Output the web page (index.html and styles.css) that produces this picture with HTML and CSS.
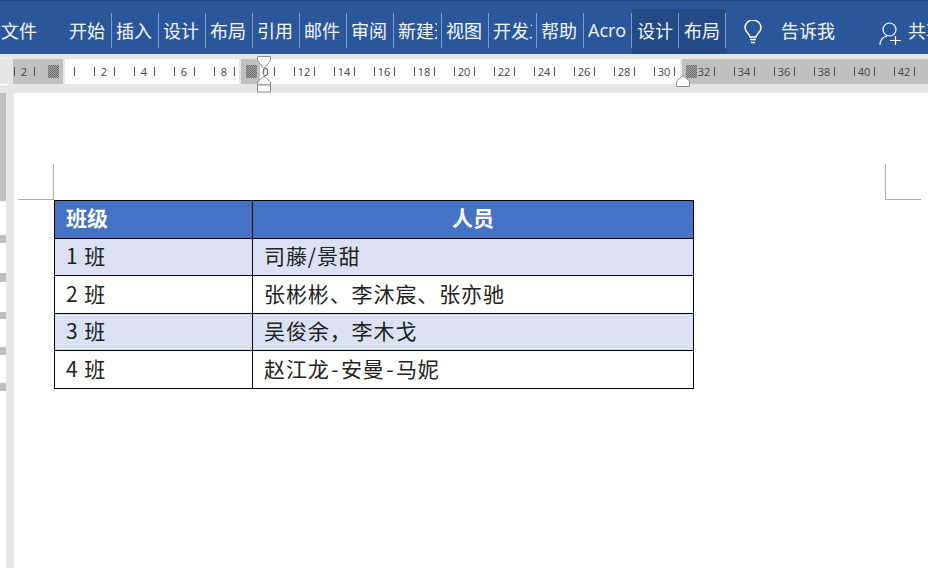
FILE: index.html
```html
<!DOCTYPE html>
<html lang="zh-CN">
<head>
<meta charset="utf-8">
<title>Word</title>
<link rel="stylesheet" href="styles.css">
</head>
<body>
<header class="ribbon">
  <div class="file-tab">文件</div>
  <nav class="tabs">
    <div class="tab">开始</div>
    <div class="tab">插入</div>
    <div class="tab">设计</div>
    <div class="tab">布局</div>
    <div class="tab">引用</div>
    <div class="tab">邮件</div>
    <div class="tab">审阅</div>
    <div class="tab tab-wide"><span class="clip">新建选</span></div>
    <div class="tab">视图</div>
    <div class="tab tab-wide"><span class="clip">开发工</span></div>
    <div class="tab">帮助</div>
    <div class="tab tab-wide tab-latin">Acro</div>
    <div class="context-tabs">
      <div class="tab">设计</div>
      <div class="tab">布局</div>
    </div>
  </nav>
  <svg class="bulb" width="18" height="25" viewBox="0 0 18 25" fill="none" stroke="#fff" stroke-width="1.4">
    <path d="M6 17c0-3-5-5-5-9a8 8 0 0 1 16 0c0 4-5 6-5 9z"/>
    <path d="M6 19.500h6M7 22.500h4"/>
  </svg>
  <div class="tell-me">告诉我</div>
  <svg class="person" width="24" height="25" viewBox="0 0 24 25" fill="none" stroke="#fff" stroke-width="1.2">
    <circle cx="10.500" cy="7.500" r="6.500"/>
    <path d="M1 23c0-5 3-8 7-9"/>
    <path d="M11 18.500h11M16.500 14v9"/>
  </svg>
  <div class="share">共享</div>
</header>

<section class="ruler-band">
  <div class="ruler-corner"></div>
  <div class="ruler">
    <div class="cell"><i></i><span>2</span><i></i></div>
    <div class="cell"><i></i><span></span><i></i></div>
    <div class="cell"><i></i><span>2</span><i></i></div>
    <div class="cell"><i></i><span>4</span><i></i></div>
    <div class="cell"><i></i><span>6</span><i></i></div>
    <div class="cell"><i></i><span>8</span><i></i></div>
    <div class="cell cell-zero"><i></i><span>0</span><i></i></div>
    <div class="cell"><i></i><span>12</span><i></i></div>
    <div class="cell"><i></i><span>14</span><i></i></div>
    <div class="cell"><i></i><span>16</span><i></i></div>
    <div class="cell"><i></i><span>18</span><i></i></div>
    <div class="cell"><i></i><span>20</span><i></i></div>
    <div class="cell"><i></i><span>22</span><i></i></div>
    <div class="cell"><i></i><span>24</span><i></i></div>
    <div class="cell"><i></i><span>26</span><i></i></div>
    <div class="cell"><i></i><span>28</span><i></i></div>
    <div class="cell"><i></i><span>30</span><i></i></div>
    <div class="cell"><i></i><span>32</span><i></i></div>
    <div class="cell"><i></i><span>34</span><i></i></div>
    <div class="cell"><i></i><span>36</span><i></i></div>
    <div class="cell"><i></i><span>38</span><i></i></div>
    <div class="cell"><i></i><span>40</span><i></i></div>
    <div class="cell"><i></i><span>42</span><i></i></div>
    <div class="hatch hatch-a"></div>
    <div class="hatch hatch-b"></div>
    <div class="hatch hatch-c"></div>
  </div>
  <svg class="marker marker-left" width="14" height="37" viewBox="0 0 14 37" fill="#fff" stroke="#8c8c8c" stroke-width="1">
    <path d="M.5.500h13v4L7 12.500.5 4.500z"/>
    <path d="M7 20l6.500 6v3H.5v-3z"/>
    <path d="M.5 29h13v7H.5z"/>
  </svg>
  <svg class="marker marker-right" width="14" height="12" viewBox="0 0 14 12" fill="#fff" stroke="#8c8c8c" stroke-width="1">
    <path d="M7 .5l6.500 5.500v5.500H.5V6z"/>
  </svg>
</section>

<main class="workspace">
  <aside class="vruler"></aside>
  <div class="page">
    <div class="crops">
      <div class="crop crop-left"></div>
      <div class="crop crop-right"></div>
    </div>
    <table class="sheet">
      <colgroup><col class="col-a"><col class="col-b"></colgroup>
      <thead>
        <tr class="row-tall"><th class="head-left">班级</th><th>人员</th></tr>
      </thead>
      <tbody>
        <tr class="row-short band"><td>1 班</td><td>司藤/景甜</td></tr>
        <tr class="row-tall"><td>2 班</td><td>张彬彬、李沐宸、张亦驰</td></tr>
        <tr class="row-short band"><td>3 班</td><td>吴俊余，李木戈</td></tr>
        <tr class="row-tall"><td>4 班</td><td>赵江龙<span class="dash">-</span>安曼<span class="dash">-</span>马妮</td></tr>
      </tbody>
    </table>
  </div>
</main>
</body>
</html>
```
FILE: styles.css
```css
* { box-sizing: border-box; }
html, body { margin: 0; padding: 0; }
body {
  width: 928px;
  height: 568px;
  overflow: hidden;
  background: #fff;
  font-family: "Noto Sans CJK SC", "Noto Sans", sans-serif;
}

/* ribbon */
.ribbon {
  height: 54px;
  display: flex;
  align-items: flex-start;
  background: #2b579a;
  border-top: 1px solid #1f4579;
  color: #f4f7fb;
  font-size: 18px;
  line-height: 26px;
  white-space: nowrap;
  overflow: hidden;
}
.ribbon > * { flex: none; }
.file-tab { width: 65px; padding: 16px 0 0 1px; }
.tabs { display: flex; align-items: flex-start; padding-top: 12px; }
.tab {
  flex: none;
  width: 47px;
  height: 35px;
  padding: 4px 0 0 4px;
  border-right: 1px solid #7f9bc6;
  overflow: hidden;
}
.tab-wide { width: 48px; }
.tab-latin { font-family: "Open Sans", sans-serif; }
.clip { display: block; width: 39px; overflow: hidden; }
.context-tabs {
  display: flex;
  height: 45px;
  margin-top: -4px;
  padding-top: 4px;
  background: #234a85;
}
.context-tabs .tab { padding-left: 5px; }
.bulb { margin: 19px 0 0 18px; }
.tell-me { margin: 16px 0 0 19px; }
.person { margin: 21px 0 0 44px; }
.share { margin: 16px 0 0 5px; }

/* horizontal ruler */
.ruler-band {
  position: relative;
  height: 39px;
  padding-top: 5px;
  background: #e6e6e6;
}
.ruler-corner {
  position: absolute;
  left: 0;
  top: 4px;
  width: 9px;
  height: 28px;
  background: #fff;
  border: solid #f1f1f1;
  border-width: 1px 1px 1px 0;
}
.ruler {
  position: relative;
  height: 25px;
  display: flex;
  padding-left: 4px;
  background: linear-gradient(to right,
    #e6e6e6 0 13px, #c0c0c0 13px 63px, #e6e6e6 63px 65px,
    #fff 65px 239px, #e6e6e6 239px 241px, #c0c0c0 241px 260px,
    #fff 260px 680px, #e6e6e6 680px 682px, #c0c0c0 682px 928px);
}
.cell {
  flex: none;
  width: 40px;
  display: flex;
  align-items: center;
  justify-content: center;
  color: #444;
  font: 11px/25px "Open Sans", sans-serif;
}
.cell span { width: 19px; text-align: center; }
.cell i { width: 1px; height: 9px; background: #555; }
.cell-zero span { padding-left: 3px; }
.hatch {
  position: absolute;
  top: 6px;
  width: 11px;
  height: 13px;
  background: repeating-conic-gradient(#666 0 25%, #a8a8a8 0 50%) 0 0 / 2px 2px;
}
.hatch-a { left: 48px; }
.hatch-b { left: 246px; }
.hatch-c { left: 686px; }
.marker { position: absolute; }
.marker-left { left: 257px; top: 2px; }
.marker-right { left: 676px; top: 21px; }

/* document */
.workspace {
  display: flex;
  height: 475px;
}
.vruler {
  flex: none;
  width: 14px;
  border-right: 8px solid #e6e6e6;
  background: linear-gradient(to bottom,
    #c0c0c0 0 108px, #fff 108px 142px, #c0c0c0 142px 150px,
    #fff 150px 180px, #c0c0c0 180px 189px, #fff 189px 219px,
    #c0c0c0 219px 226px, #fff 226px 254px, #c0c0c0 254px 262px,
    #fff 262px 290px, #c0c0c0 290px 298px, #fff 298px);
}
.page { flex: 1; padding-top: 71px; }
.crops {
  display: flex;
  justify-content: space-between;
  padding: 0 7px 0 4px;
}
.crop {
  width: 36px;
  height: 36px;
  border-bottom: 1px solid #adadad;
}
.crop-left { border-right: 1px solid #adadad; }
.crop-right { border-left: 1px solid #adadad; }

.sheet {
  margin-left: 40px;
  width: 640px;
  table-layout: fixed;
  border-collapse: collapse;
  color: #222;
  font-size: 21px;
  letter-spacing: 0.9px;
}
.col-a { width: 198px; }
.sheet th, .sheet td {
  padding: 0 0 4px 11px;
  border: 1px solid #000;
  text-align: left;
  font-weight: 400;
  line-height: 24px;
}
.sheet th {
  padding: 0 0 6px;
  background: #4472c4;
  color: #fff;
  font-weight: 700;
  text-align: center;
  letter-spacing: 0;
}
.sheet th.head-left { padding-left: 11px; text-align: left; }
.dash { margin: 0 1.500px; }
.row-tall { height: 38px; }
.row-short { height: 37px; }
.band td { background: #d9e1f2; }
```
